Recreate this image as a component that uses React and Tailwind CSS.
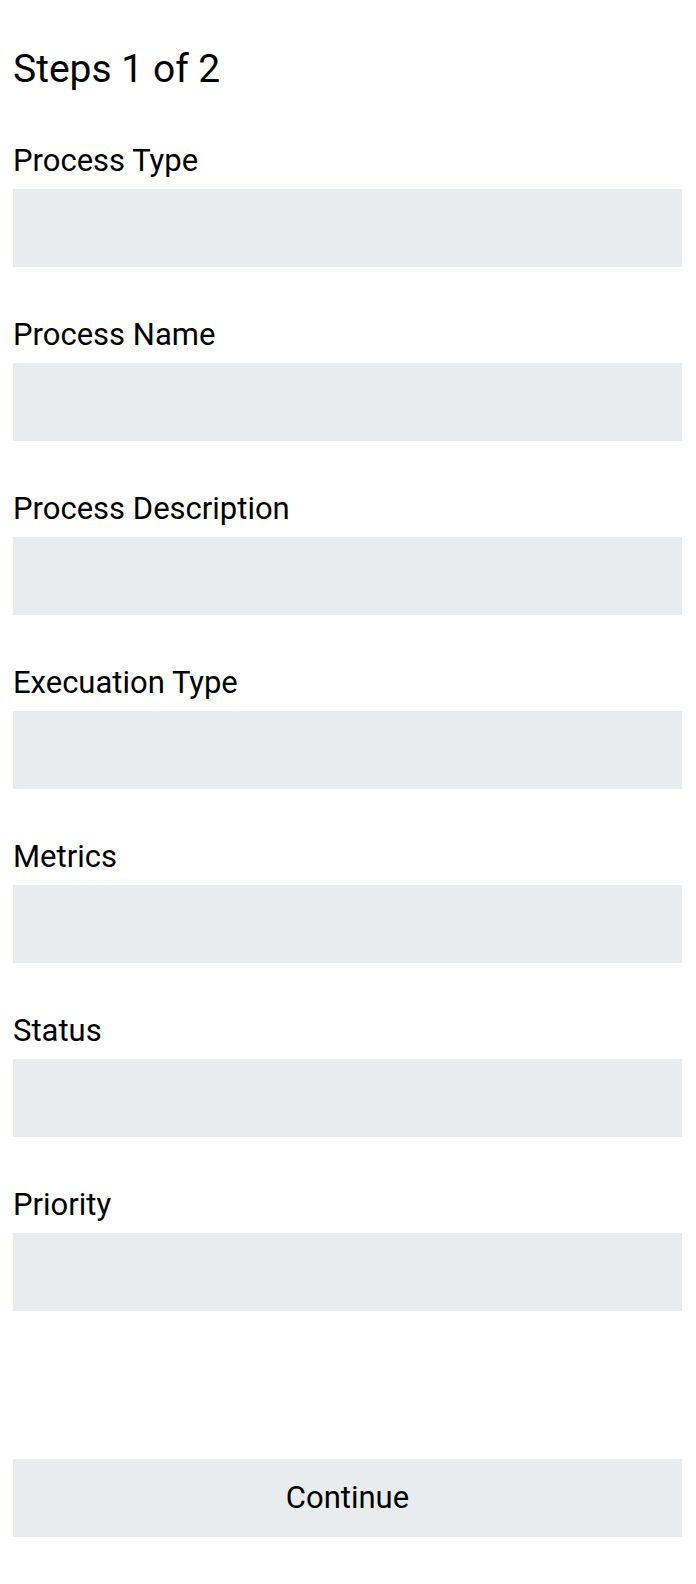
import React from 'react';

const FIELDS = ['Process Type', 'Process Name', 'Process Description', 'Execuation Type', 'Metrics', 'Status', 'Priority'];

function Field({ label }) {
  return (
    <div className="flex flex-col gap-[12px]">
      <label className="text-[31px] leading-[32px] text-black">{label}</label>
      <input className="h-[78px] w-full bg-[#e9ecef] px-3 outline-none" />
    </div>
  );
}

export default function App() {
  return (
    <div className="min-h-[1584px] bg-white pt-[49px] pl-[13px] pr-[14px] font-['Roboto',sans-serif] text-black">
      <h1 className="text-[39px] leading-[40px] font-normal">Steps 1 of 2</h1>
      <form className="mt-[56px] flex flex-col gap-[52px]" onSubmit={(e) => e.preventDefault()}>
        {FIELDS.map((f) => <Field key={f} label={f} />)}
      </form>
      <button className="mt-[148px] flex h-[78px] w-full items-center justify-center bg-[#e9ecef] text-[31px] text-black">
        Continue
      </button>
    </div>
  );
}
